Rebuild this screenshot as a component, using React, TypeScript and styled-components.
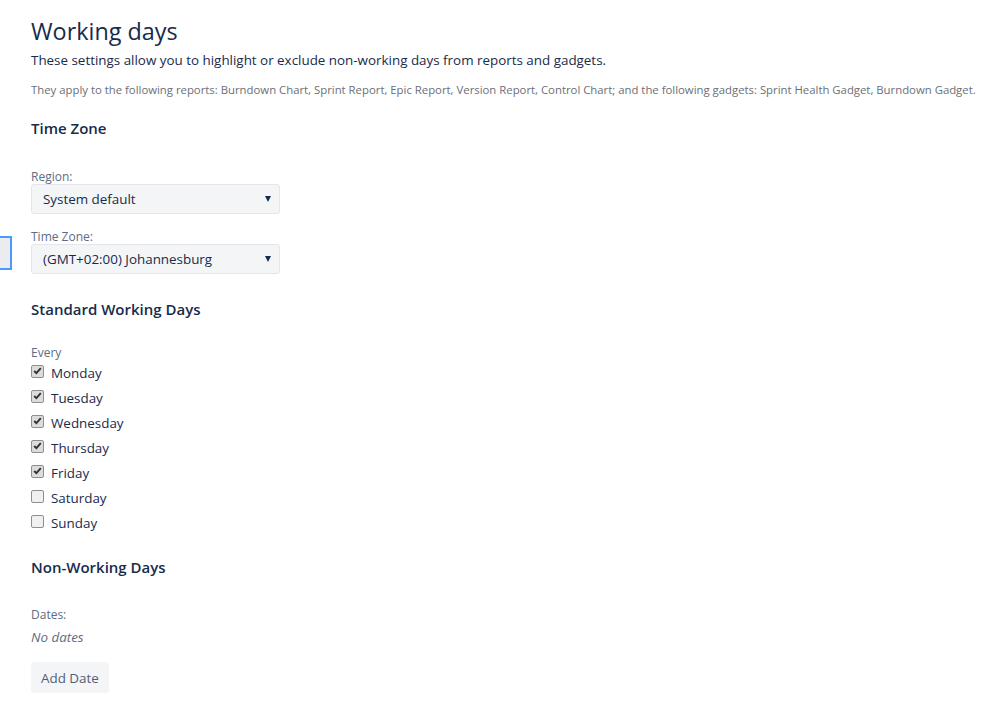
import React from "react";
import styled, { createGlobalStyle } from "styled-components";

const FONT = `"Segoe UI", "Open Sans", "Noto Sans", sans-serif`;

const Global = createGlobalStyle`
  html, body { margin: 0; padding: 0; background: #fff; }
  body { font-family: ${FONT}; color: #172b4d; }
`;

const Page = styled.div`
  position: relative;
  padding: 14px 31px 30px;
  width: 999px;
  box-sizing: border-box;
`;

const Title = styled.h1`
  margin: 0;
  font-size: 23.4px;
  font-weight: 500;
  line-height: 34px;
  color: #172b4d;
`;

const Lead = styled.p`
  margin: 2px 0 0;
  font-size: 13.4px;
  line-height: 20px;
  color: #172b4d;
`;

const Note = styled.p`
  margin: 12px 0 0;
  font-size: 11.35px;
  line-height: 16px;
  color: #6b6f78;
  white-space: nowrap;
`;

const SectionTitle = styled.h2<{ $top: number }>`
  margin: ${(p) => p.$top}px 0 0;
  font-size: 15px;
  font-weight: 600;
  line-height: 22px;
  color: #172b4d;
`;

const Field = styled.div<{ $top: number }>`
  display: flex;
  flex-direction: column;
  margin-top: ${(p) => p.$top}px;
`;

const Label = styled.label`
  font-size: 12px;
  line-height: 16px;
  color: #5e6c84;
`;

const Select = styled.div`
  margin-top: -1px;
  width: 249px;
  height: 30px;
  box-sizing: border-box;
  display: flex;
  align-items: center;
  justify-content: space-between;
  padding: 0 8px 0 11px;
  background: #f4f5f7;
  border: 1px solid #e4e6ea;
  border-radius: 3px;
  font-size: 13.4px;
  color: #172b4d;
`;

const Caret = styled.span`
  width: 0;
  height: 0;
  border-left: 3px solid transparent;
  border-right: 3px solid transparent;
  border-top: 6px solid #172b4d;
`;

const DayList = styled.div`
  display: flex;
  flex-direction: column;
  margin-top: -1px;
`;

const DayRow = styled.label`
  display: flex;
  align-items: center;
  gap: 7px;
  height: 25px;
  font-size: 13.4px;
  color: #172b4d;
`;

const Box = styled.span<{ $on: boolean }>`
  width: 13px;
  height: 13px;
  box-sizing: border-box;
  border: 1px solid #8f8f8f;
  border-radius: 2px;
  background: ${(p) => (p.$on ? "#dcdcdc" : "#f0f0f0")};
  display: flex;
  align-items: center;
  justify-content: center;
  margin-top: -3px;
`;

const Empty = styled.div`
  margin-top: 4px;
  font-size: 13.4px;
  font-style: italic;
  color: #5e6c84;
  line-height: 20px;
`;

const Button = styled.button`
  margin-top: 15px;
  height: 31px;
  padding: 0 10px;
  border: none;
  border-radius: 3px;
  background: #f4f5f7;
  color: #505f79;
  font-family: ${FONT};
  font-size: 13.4px;
`;

const FocusStub = styled.div`
  position: absolute;
  left: -2px;
  top: 236px;
  width: 14px;
  height: 34px;
  box-sizing: border-box;
  border: 2px solid #4c9aff;
  background: #ebecf0;
`;

const days: [string, boolean][] = [
  ["Monday", true],
  ["Tuesday", true],
  ["Wednesday", true],
  ["Thursday", true],
  ["Friday", true],
  ["Saturday", false],
  ["Sunday", false],
];

export default function App() {
  return (
    <>
      <Global />
      <Page>
        <FocusStub />
        <Title>Working days</Title>
        <Lead>These settings allow you to highlight or exclude non-working days from reports and gadgets.</Lead>
        <Note>
          They apply to the following reports: Burndown Chart, Sprint Report, Epic Report, Version Report, Control Chart; and the following gadgets: Sprint Health Gadget, Burndown Gadget.
        </Note>
        <SectionTitle $top={19}>Time Zone</SectionTitle>
        <Field $top={30}>
          <Label>Region:</Label>
          <Select>
            <span>System default</span>
            <Caret />
          </Select>
        </Field>
        <Field $top={15}>
          <Label>Time Zone:</Label>
          <Select>
            <span>(GMT+02:00) Johannesburg</span>
            <Caret />
          </Select>
        </Field>
        <SectionTitle $top={24}>Standard Working Days</SectionTitle>
        <Field $top={25}>
          <Label>Every</Label>
          <DayList>
            {days.map(([d, on]) => (
              <DayRow key={d}>
                <Box $on={on}>
                  {on && (
                    <svg width="9" height="8" viewBox="0 0 9 8">
                      <path d="M1.2 4 L3.4 6.2 L7.8 1.2" stroke="#333" strokeWidth="1.9" fill="none" />
                    </svg>
                  )}
                </Box>
                <span>{d}</span>
              </DayRow>
            ))}
          </DayList>
        </Field>
        <SectionTitle $top={21}>Non-Working Days</SectionTitle>
        <Field $top={29}>
          <Label>Dates:</Label>
          <Empty>No dates</Empty>
          <div>
            <Button>Add Date</Button>
          </div>
        </Field>
      </Page>
    </>
  );
}
